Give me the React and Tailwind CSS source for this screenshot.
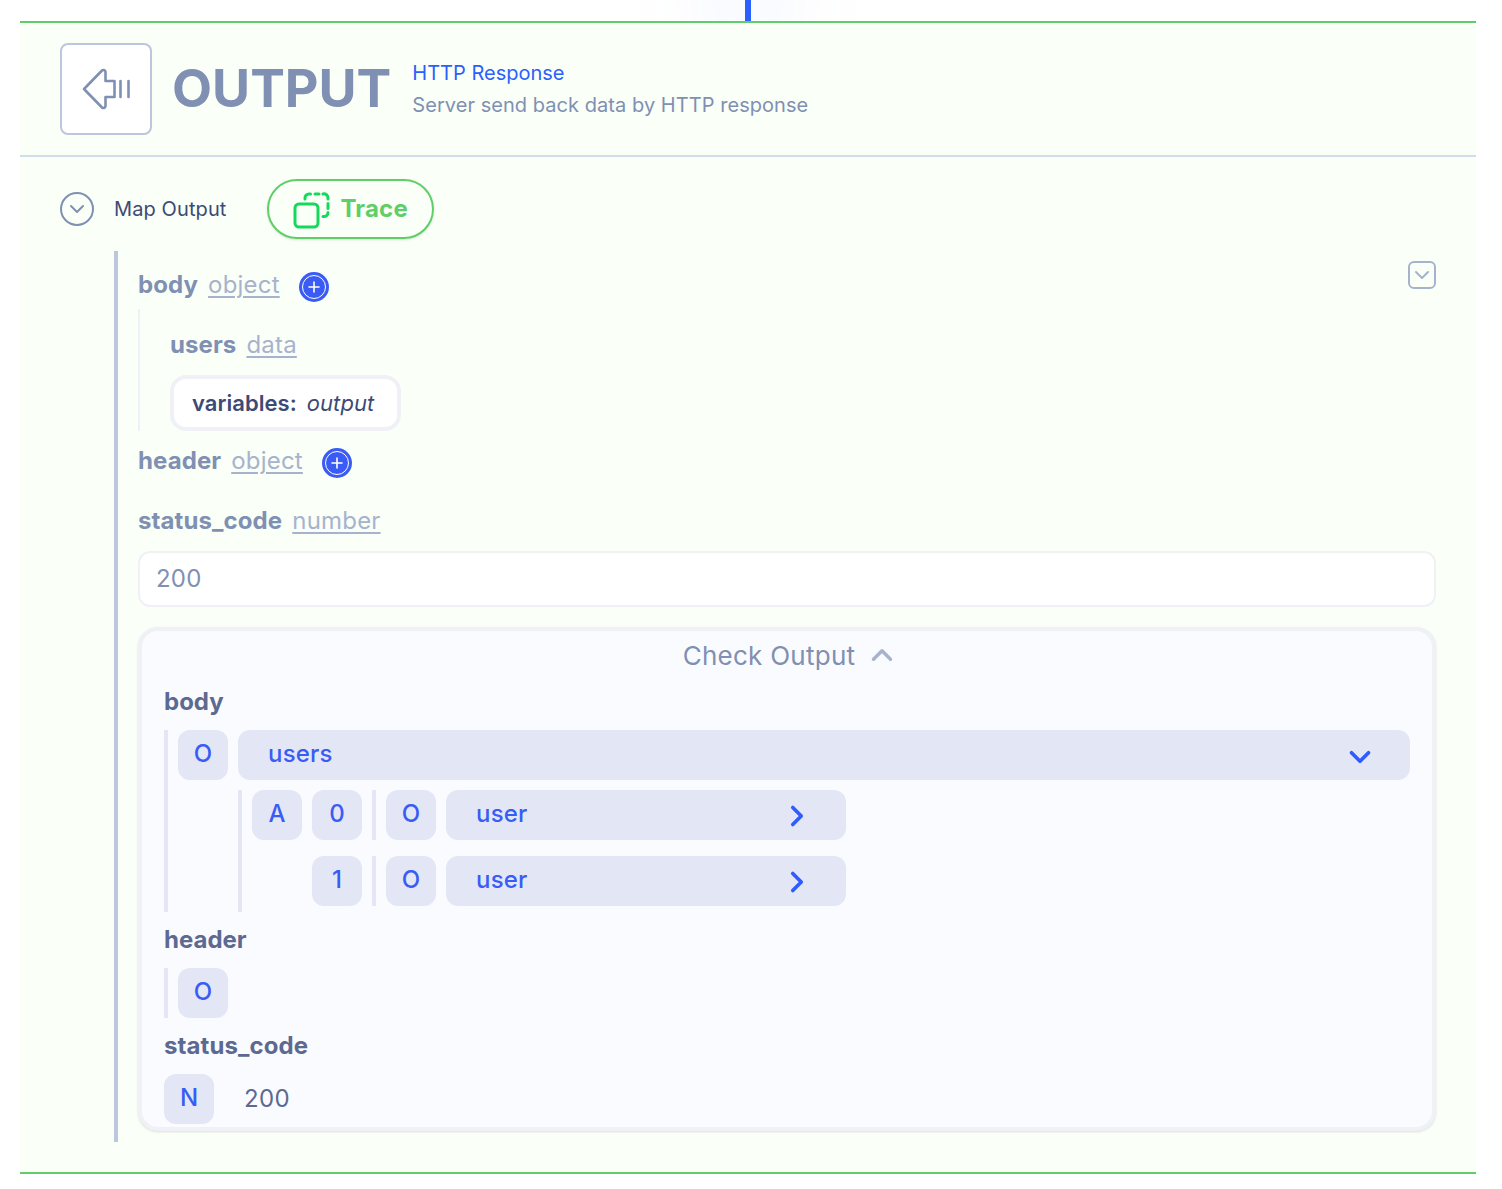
import { ChevronDown, ChevronRight, ChevronUp } from 'lucide-react'

function Tag({ children }) {
  return (
    <div className="w-[50px] h-[50px] shrink-0 rounded-xl bg-[#e3e7f5] flex items-center justify-center pb-0.5 text-[24px] font-medium text-[#3a5cf5]">
      {children}
    </div>
  )
}

function Bar({ className }) {
  return <div className={`w-1 shrink-0 bg-[#e3e7f5] ${className}`} />
}

function KeyRow({ name, type, plus, className }) {
  return (
    <div className={`flex items-center text-[24px] leading-[30px] ${className}`}>
      <span className="font-bold tracking-[0.1px] text-[#8090b2]">{name}</span>
      <span className="ml-[10px] tracking-[0.2px] text-[#a7b3cd] underline underline-offset-[3px] decoration-2">{type}</span>
      {plus && (
        <div className="ml-[19.5px] mt-0.5 -mb-0.5 w-[30px] h-[30px] rounded-full bg-[#3a5cf5] flex items-center justify-center">
          <div className="w-[24px] h-[24px] rounded-full border border-white flex items-center justify-center">
            <svg width="14" height="14" viewBox="0 0 14 14" fill="none" stroke="white" strokeWidth="1.6" strokeLinecap="round">
              <path d="M7 2v10M2 7h10" />
            </svg>
          </div>
        </div>
      )}
    </div>
  )
}

function UserRow({ index, first, className }) {
  return (
    <div className={`flex ${className}`}>
      {first ? <Tag>A</Tag> : <div className="w-[50px] shrink-0" />}
      <div className="ml-2.5"><Tag>{index}</Tag></div>
      <Bar className="ml-2.5 h-[50px]" />
      <div className="ml-2.5"><Tag>O</Tag></div>
      <div className="ml-2.5 w-[400px] h-[50px] rounded-xl bg-[#e3e7f5] flex items-center justify-between pl-[30px] pr-[32px] pb-0.5 text-[24px] tracking-[0.2px] font-medium text-[#3a5cf5]">
        user
        <ChevronRight size={34} strokeWidth={2.6} className="text-[#2f5bff] mt-1" />
      </div>
    </div>
  )
}

function ChevronBox() {
  return (
    <div className="absolute right-0 top-[10px] w-7 h-7 rounded-md border-2 border-[#a7b3cd] flex items-center justify-center">
      <ChevronDown size={24} strokeWidth={2} className="text-[#a7b3cd]" />
    </div>
  )
}

export default function App() {
  return (
    <div className="relative min-h-[1189px] bg-white overflow-hidden pt-[21px] pl-5 pr-[26px] [font-family:Inter,sans-serif] [font-optical-sizing:none]">
      {/* glow + connector from the previous node */}
      <div className="absolute left-[698px] -top-[50px] w-[100px] h-[100px] rounded-full bg-[#3a5cf5]/5 blur-2xl pointer-events-none" />
      <div className="absolute left-[745px] top-0 w-1.5 h-[21px] bg-[#2a60ff]" />

      <div className="relative border-y-2 border-[#5fce68] bg-[#fafff8] h-[1153px]">
        {/* Header */}
        <div className="h-[134px] border-b-2 border-[#d3dceb] flex items-center pl-10 pb-[1px]">
          <div className="w-[92px] h-[92px] rounded-lg border-2 border-[#bcc6dc] bg-white flex items-center justify-center">
            <svg width="50" height="42" viewBox="0 0 50 42" fill="none" stroke="#8090b2" strokeWidth="2.6" strokeLinejoin="round" strokeLinecap="round">
              <path d="M3 21 L21 2.5 Q24 1 24.5 4 V13 H33.5 V29 H24.5 V38 Q24 41 21 39.5 Z" />
              <path d="M39.5 13v16M47.5 13v16" />
            </svg>
          </div>
          <div className="ml-5 text-[52px] leading-none font-bold text-[#8090b2]">OUTPUT</div>
          <div className="ml-[21px]">
            <div className="text-[20px] leading-[30px] text-[#2a60ff]">HTTP Response</div>
            <div className="mt-0.5 text-[20px] leading-[30px] tracking-[0.05px] text-[#8090b2]">Server send back data by HTTP response</div>
          </div>
        </div>

        {/* Map output toggle */}
        <div className="flex items-center pl-10 mt-[22px]">
          <div className="w-[34px] h-[34px] rounded-full border-2 border-[#8090b2] flex items-center justify-center">
            <ChevronDown size={24} strokeWidth={2} className="text-[#8090b2]" />
          </div>
          <span className="ml-5 text-[20px] tracking-[0.1px] text-[#3c4a75]">Map Output</span>
          <div className="ml-[41px] w-[167px] h-[60px] rounded-full border-2 border-[#5fce68] flex items-center pl-[24px] shadow-sm">
            <svg className="mt-[3px]" width="38" height="38" viewBox="0 0 38 38" fill="none" stroke="#14d95c" strokeWidth="3" strokeLinecap="round">
              <rect x="2" y="12" width="23" height="23" rx="4" />
              <path d="M12 7V6a4 4 0 0 1 4-4h1.5M22 2h4M30 2a4 4 0 0 1 5 4v1M35 11.5v5M35 20.5a4 4 0 0 1-4 4h-1" />
            </svg>
            <span className="ml-[9px] text-[24px] tracking-[0.2px] font-bold text-[#5fce68]">Trace</span>
          </div>
        </div>

        {/* Mapping tree */}
        <div className="relative ml-[94px] mt-3 mr-10 border-l-[4px] border-[#bcc6dc] pl-5 h-[891px]">
          <ChevronBox />
          <KeyRow name="body" type="object" plus className="pt-[19px]" />
          <div className="mt-[9px] border-l-2 border-[#eef1f7] pl-[30px] h-[122px]">
            <KeyRow name="users" type="data" className="pt-[21px]" />
            <div className="mt-[15px] w-[231px] h-[56px] rounded-2xl border-4 border-[#eff1f7] bg-white flex items-center pl-[18px] text-[22px] tracking-[0.05px] text-[#3c4a75]">
              <span className="font-semibold">variables:</span>
              <span className="ml-2.5 italic">output</span>
            </div>
          </div>
          <KeyRow name="header" type="object" plus className="mt-[15px]" />
          <KeyRow name="status_code" type="number" className="mt-[30px]" />
          <div className="mt-[15px] h-14 rounded-xl border-2 border-[#eff1f7] bg-white flex items-center pl-4 text-[24px] tracking-[0.2px] text-[#8090b2]">200</div>

          {/* Check output */}
          <div className="mt-5 h-[504px] rounded-[20px] border-4 border-[#eff1f7] bg-[#fafbfe] shadow-sm px-[22px]">
            <div className="flex items-center justify-center h-[48px] pl-2 text-[26px] tracking-[0.25px] text-[#8090b2]">
              Check Output
              <ChevronUp size={34} strokeWidth={2.4} className="ml-2.5 text-[#a7b3cd]" />
            </div>
            <div className="mt-[8px] text-[24px] leading-[30px] font-bold text-[#5c6a91]">body</div>
            <div className="mt-[13px] flex">
              <Bar className="h-[182px]" />
              <div className="ml-2.5 flex-1 min-w-0">
                <div className="flex">
                  <Tag>O</Tag>
                  <div className="ml-2.5 flex-1 h-[50px] rounded-xl bg-[#e3e7f5] flex items-center justify-between pl-[30px] pr-[33px] pb-0.5 text-[24px] tracking-[0.2px] font-medium text-[#3a5cf5]">
                    users
                    <ChevronDown size={34} strokeWidth={2.6} className="text-[#2f5bff] mt-1.5" />
                  </div>
                </div>
                <div className="mt-2.5 ml-[60px] flex">
                  <Bar className="h-[122px]" />
                  <div className="ml-2.5">
                    <UserRow index="0" first />
                    <UserRow index="1" className="mt-4" />
                  </div>
                </div>
              </div>
            </div>
            <div className="mt-[13px] text-[24px] leading-[30px] font-bold text-[#5c6a91]">header</div>
            <div className="mt-[13px] flex">
              <Bar className="h-[50px]" />
              <div className="ml-2.5"><Tag>O</Tag></div>
            </div>
            <div className="mt-[13px] text-[24px] leading-[30px] font-bold tracking-[0.1px] text-[#5c6a91]">status_code</div>
            <div className="mt-[13px] flex items-center">
              <Tag>N</Tag>
              <span className="ml-[30px] text-[24px] tracking-[0.4px] text-[#5c6a91]">200</span>
            </div>
          </div>
        </div>
      </div>
    </div>
  )
}
